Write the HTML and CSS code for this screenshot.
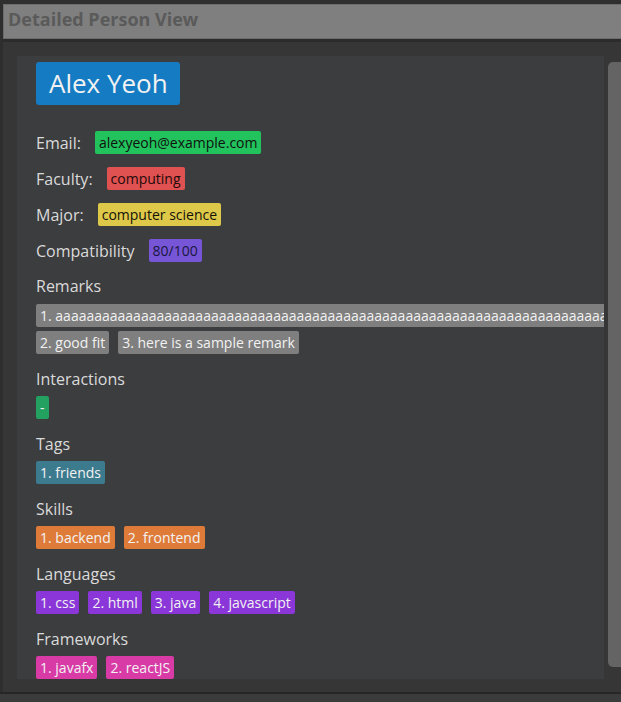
FILE: index.html
```html
<!DOCTYPE html>
<html>
<head>
<meta charset="utf-8">
<link rel="stylesheet" href="styles.css">
</head>
<body>
<div class="app">
  <div class="topstrip"></div>
  <div class="titlebar">Detailed Person View</div>
  <div class="sep"></div>
  <div class="content">
    <div class="panel">
      <div class="name">Alex Yeoh</div>
      <div class="row"><span class="label">Email:</span><span class="chip c-email">alexyeoh@example.com</span></div>
      <div class="row"><span class="label">Faculty:</span><span class="chip c-faculty">computing</span></div>
      <div class="row"><span class="label">Major:</span><span class="chip c-major">computer science</span></div>
      <div class="row"><span class="label">Compatibility</span><span class="chip c-compat">80/100</span></div>
      <div class="section remarks">
        <div class="slabel">Remarks</div>
        <div class="chips">
          <span class="chip c-remark">1. aaaaaaaaaaaaaaaaaaaaaaaaaaaaaaaaaaaaaaaaaaaaaaaaaaaaaaaaaaaaaaaaaaaaaaaaaaaaaaaaaaaaaaaaaa</span>
          <span class="chip c-remark">2. good fit</span>
          <span class="chip c-remark">3. here is a sample remark</span>
        </div>
      </div>
      <div class="section">
        <div class="slabel">Interactions</div>
        <div class="chips"><span class="chip c-inter">-</span></div>
      </div>
      <div class="section">
        <div class="slabel">Tags</div>
        <div class="chips"><span class="chip c-tag">1. friends</span></div>
      </div>
      <div class="section">
        <div class="slabel">Skills</div>
        <div class="chips"><span class="chip c-skill">1. backend</span><span class="chip c-skill">2. frontend</span></div>
      </div>
      <div class="section">
        <div class="slabel">Languages</div>
        <div class="chips"><span class="chip c-lang">1. css</span><span class="chip c-lang">2. html</span><span class="chip c-lang">3. java</span><span class="chip c-lang">4. javascript</span></div>
      </div>
      <div class="section">
        <div class="slabel">Frameworks</div>
        <div class="chips"><span class="chip c-fw">1. javafx</span><span class="chip c-fw">2. reactJS</span></div>
      </div>
    </div>
    <div class="scrollbar"></div>
  </div>
  <div class="bottomline"></div>
  <div class="footer"></div>
</div>
</body>
</html>
```
FILE: styles.css
```css
html, body {
  margin: 0;
  padding: 0;
}
body {
  width: 621px;
  height: 702px;
  overflow: hidden;
  background: #2e2e2e;
  font-family: "Open Sans", "DejaVu Sans", sans-serif;
}
.app {
  display: flex;
  flex-direction: column;
  height: 702px;
}
.topstrip {
  height: 4px;
  background: #2f2f2f;
}
.titlebar {
  margin-left: 3px;
  height: 33px;
  background: #7f7f7f;
  border: 1px solid #6c6c6c;
  border-right: none;
  color: #5a5a5a;
  font-size: 18px;
  font-weight: 700;
  line-height: 29px;
  padding-left: 4px;
}
.sep {
  height: 3px;
  margin-left: 3px;
  background: #2b2b2b;
}
.content {
  margin-left: 3px;
  height: 650px;
  background: #363636;
  display: flex;
  align-items: flex-start;
  overflow: hidden;
}
.panel {
  flex-shrink: 0;
  margin-top: 14px;
  margin-left: 14px;
  width: 568px;
  height: 617px;
  padding: 6px 0 0 19px;
  background: #3c3d3f;
  overflow: hidden;
  color: #dadada;
}
.scrollbar {
  flex-shrink: 0;
  margin-top: 20px;
  margin-left: 4px;
  width: 20px;
  height: 605px;
  background: #646464;
  border-radius: 5px;
}
.name {
  display: inline-block;
  background: #157cc4;
  color: #f2f2f2;
  font-size: 26px;
  line-height: 43px;
  height: 43px;
  padding: 0 12px 0 13px;
  border-radius: 3px;
  margin-bottom: 26px;
}
.row {
  display: flex;
  align-items: center;
  gap: 14px;
  height: 23px;
  margin-bottom: 13px;
}
.label, .slabel {
  font-size: 16px;
  line-height: 22px;
  color: #dadada;
}
.slabel {
  margin-bottom: 6px;
}
.remarks .slabel {
  margin-bottom: 7px;
}
.section {
  margin-bottom: 14px;
}
.chips {
  display: flex;
  flex-wrap: wrap;
  gap: 4px 9px;
}
.chip {
  display: block;
  font-size: 14px;
  line-height: 19px;
  height: 23px;
  box-sizing: border-box;
  padding: 2px 4px;
  border-radius: 2px;
  white-space: nowrap;
  color: #f2f2f2;
}
.c-email { background: #22c35c; color: #111; }
.c-faculty { background: #e05151; color: #1e0b0b; }
.c-major { background: #dec84a; color: #141208; }
.c-compat { background: #7655d6; color: #1a1740; }
.c-remark { background: #7f7f7f; }
.c-inter { background: #22a160; }
.c-tag { background: #3c7a8e; }
.c-skill { background: #df7b38; }
.c-lang { background: #8a36d8; }
.c-fw { background: #d83aa6; }
.bottomline {
  height: 2px;
  background: #262626;
}
.footer {
  flex: 1;
  background: #3b3b3b;
}
```
